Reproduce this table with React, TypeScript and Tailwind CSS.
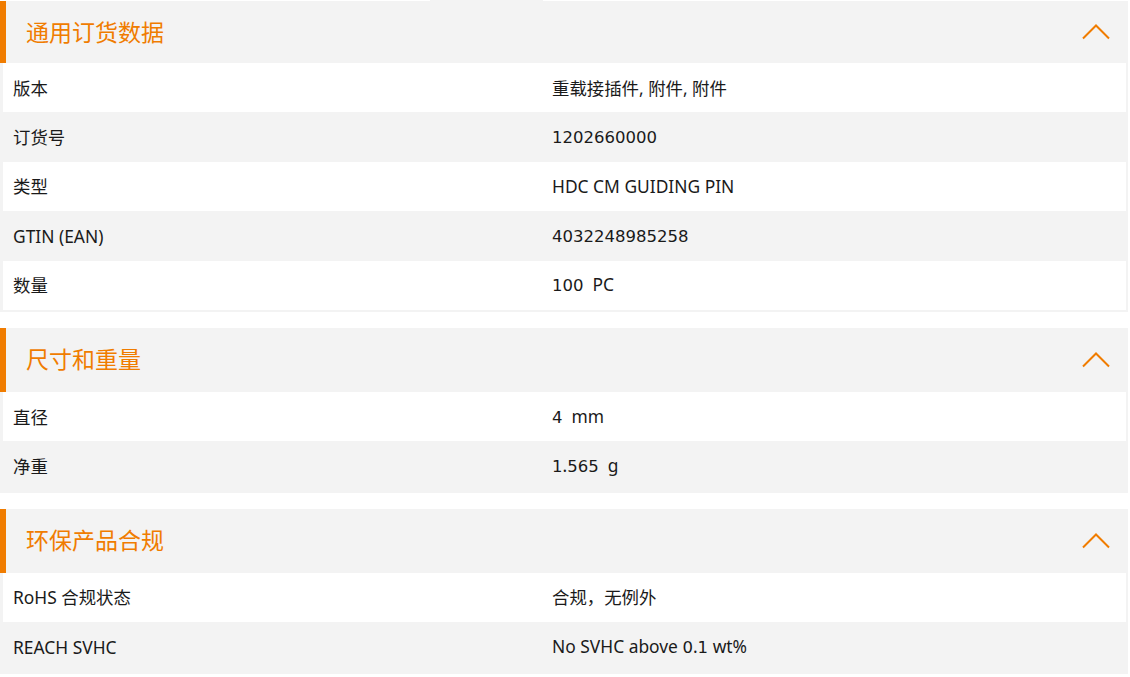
import React from "react";

type Row = { label: string; value: string };

interface SectionProps {
  title: string;
  rows: Row[];
  headerClass?: string;
  className?: string;
}

const sections: { title: string; rows: Row[] }[] = [
  {
    title: "通用订货数据",
    rows: [
      { label: "版本", value: "重载接插件, 附件, 附件" },
      { label: "订货号", value: "1202660000" },
      { label: "类型", value: "HDC CM GUIDING PIN" },
      { label: "GTIN (EAN)", value: "4032248985258" },
      { label: "数量", value: "100  PC" },
    ],
  },
  {
    title: "尺寸和重量",
    rows: [
      { label: "直径", value: "4  mm" },
      { label: "净重", value: "1.565  g" },
    ],
  },
  {
    title: "环保产品合规",
    rows: [
      { label: "RoHS 合规状态", value: "合规，无例外" },
      { label: "REACH SVHC", value: "No SVHC above 0.1 wt%" },
    ],
  },
];

const ChevronUp = () => (
  <svg width="28" height="16" viewBox="0 0 28 16" fill="none">
    <polyline points="1,14.5 14,1.5 27,14.5" stroke="#f07c00" strokeWidth="2" />
  </svg>
);

// the digits in the original font run wider than the letters, so numbers get their own face
const Value = ({ text }: { text: string }) => (
  <>
    {text.split(/(\d+)/).map((part, i) =>
      /^\d+$/.test(part) ? (
        <span key={i} className="text-[16.5px]" style={{ fontFamily: '"DejaVu Sans", sans-serif' }}>
          {part}
        </span>
      ) : (
        <span key={i}>{part}</span>
      )
    )}
  </>
);

const Section: React.FC<SectionProps> = ({ title, rows, headerClass = "h-16", className = "" }) => (
  <section className={`w-[1128px] ${className}`}>
    <div className={`flex items-center justify-between bg-[#f3f3f3] border-l-[6px] border-[#f07c00] pl-5 pr-[18px] ${headerClass}`}>
      <h2 className="text-[23px] leading-none text-[#f07c00] font-normal">{title}</h2>
      <ChevronUp />
    </div>
    <div className="border-l-[3px] border-r-[2px] border-b-[2px] border-[#f3f3f3]">
      {rows.map((row, i) => (
        <div
          key={row.label}
          className={`flex h-[49.4px] items-center text-[17.4px] text-[#1a1a1a] ${i % 2 === 0 ? "bg-white" : "bg-[#f3f3f3]"}`}
        >
          <div className="w-[539px] pl-[10px]">{row.label}</div>
          <div className="flex-1 pl-[10px] whitespace-pre">
            <Value text={row.value} />
          </div>
        </div>
      ))}
    </div>
  </section>
);

export default function App() {
  return (
    <div
      className="min-h-screen bg-white"
      style={{ fontFamily: '"Noto Sans", "Noto Sans CJK SC", sans-serif' }}
    >
      <div className="h-px">
        <div className="ml-[430px] h-px w-[113px] bg-[#f3f3f3]" />
      </div>
      <Section title={sections[0].title} rows={sections[0].rows} headerClass="h-[62px]" />
      <Section title={sections[1].title} rows={sections[1].rows} className="mt-4" />
      <Section title={sections[2].title} rows={sections[2].rows} className="mt-4" />
    </div>
  );
}
